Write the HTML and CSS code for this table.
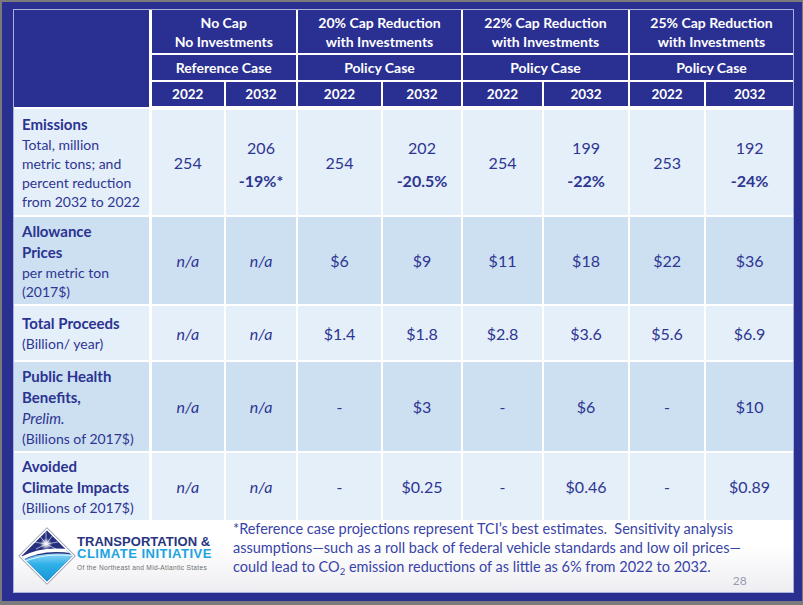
FILE: index.html
```html
<!DOCTYPE html>
<html lang="en">
<head>
<meta charset="utf-8">
<title>TCI Cap Scenarios</title>
<link rel="stylesheet" href="styles.css">
</head>
<body>
<div class="slide">
  <div class="panel">
    <table class="grid">
      <colgroup>
        <col class="c-label"><col class="c1"><col class="c2"><col class="c3"><col class="c4"><col class="c5"><col class="c6"><col class="c7"><col class="c8">
      </colgroup>
      <thead>
        <tr class="h1">
          <th class="corner" rowspan="3"></th>
          <th colspan="2">No Cap<br>No Investments</th>
          <th colspan="2">20% Cap Reduction<br>with Investments</th>
          <th colspan="2">22% Cap Reduction<br>with Investments</th>
          <th colspan="2">25% Cap Reduction<br>with Investments</th>
        </tr>
        <tr class="h2">
          <th colspan="2">Reference Case</th>
          <th colspan="2">Policy Case</th>
          <th colspan="2">Policy Case</th>
          <th colspan="2">Policy Case</th>
        </tr>
        <tr class="h3">
          <th>2022</th><th>2032</th><th>2022</th><th>2032</th><th>2022</th><th>2032</th><th>2022</th><th>2032</th>
        </tr>
      </thead>
      <tbody>
        <tr class="r-emis light">
          <td class="label"><div class="lt">Emissions</div><div class="ls">Total, million<br>metric tons; and<br>percent reduction<br>from 2032 to 2022</div></td>
          <td>254</td>
          <td class="two"><div>206</div><div class="pct">-19%*</div></td>
          <td>254</td>
          <td class="two"><div>202</div><div class="pct">-20.5%</div></td>
          <td>254</td>
          <td class="two"><div>199</div><div class="pct">-22%</div></td>
          <td>253</td>
          <td class="two"><div>192</div><div class="pct">-24%</div></td>
        </tr>
        <tr class="r-allow dark">
          <td class="label"><div class="lt">Allowance<br>Prices</div><div class="ls">per metric ton<br>(2017$)</div></td>
          <td class="na">n/a</td><td class="na">n/a</td>
          <td>$6</td><td>$9</td><td>$11</td><td>$18</td><td>$22</td><td>$36</td>
        </tr>
        <tr class="r-proc light">
          <td class="label"><div class="lt">Total Proceeds</div><div class="ls">(Billion/ year)</div></td>
          <td class="na">n/a</td><td class="na">n/a</td>
          <td>$1.4</td><td>$1.8</td><td>$2.8</td><td>$3.6</td><td>$5.6</td><td>$6.9</td>
        </tr>
        <tr class="r-health dark">
          <td class="label"><div class="lt">Public Health<br>Benefits,</div><div class="li">Prelim.</div><div class="ls">(Billions of 2017$)</div></td>
          <td class="na">n/a</td><td class="na">n/a</td>
          <td>-</td><td>$3</td><td>-</td><td>$6</td><td>-</td><td>$10</td>
        </tr>
        <tr class="r-climate light">
          <td class="label"><div class="lt">Avoided<br>Climate Impacts</div><div class="ls">(Billions of 2017$)</div></td>
          <td class="na">n/a</td><td class="na">n/a</td>
          <td>-</td><td>$0.25</td><td>-</td><td>$0.46</td><td>-</td><td>$0.89</td>
        </tr>
      </tbody>
    </table>
    <div class="footer">
      <div class="logo">
        <svg class="mark" width="58" height="58" viewBox="0 0 58 58" aria-hidden="true">
          <defs>
            <clipPath id="inner"><polygon points="29,3.5 54.5,29 29,54.5 3.5,29"/></clipPath>
            <linearGradient id="cyan" x1="0" y1="0" x2="0" y2="1">
              <stop offset="0" stop-color="#8fd6f5"/>
              <stop offset="0.35" stop-color="#2fb0e8"/>
              <stop offset="1" stop-color="#128fd4"/>
            </linearGradient>
            <radialGradient id="burst" cx="0.5" cy="0.5" r="0.5">
              <stop offset="0" stop-color="#ffffff"/>
              <stop offset="0.4" stop-color="#ffffff" stop-opacity="0.7"/>
              <stop offset="1" stop-color="#ffffff" stop-opacity="0"/>
            </radialGradient>
          </defs>
          <polygon points="29,0.7 57.3,29 29,57.3 0.7,29" fill="#ffffff" stroke="#8c90aa" stroke-width="1"/>
          <g clip-path="url(#inner)">
            <rect width="58" height="58" fill="#27307e"/>
            <path d="M0,35 Q24,23 58,28 L58,58 L0,58 Z" fill="url(#cyan)"/>
            <path d="M1,33 Q24,19 57,25" fill="none" stroke="#ffffff" stroke-width="3.5"/>
            <path d="M1,37 Q24,25 57,29" fill="none" stroke="#d6f0fb" stroke-width="1.2"/>
            <g stroke="#ffffff" stroke-width="0.7" opacity="0.85">
              <line x1="28" y1="17" x2="28" y2="5"/>
              <line x1="28" y1="17" x2="21" y2="8"/>
              <line x1="28" y1="17" x2="35" y2="8"/>
              <line x1="28" y1="17" x2="16" y2="15"/>
              <line x1="28" y1="17" x2="40" y2="15"/>
              <line x1="28" y1="17" x2="18" y2="22"/>
              <line x1="28" y1="17" x2="38" y2="22"/>
            </g>
            <circle cx="28" cy="17" r="6" fill="url(#burst)"/>
          </g>
        </svg>
        <div class="logo-text">
          <div class="lt1">TRANSPORTATION &amp;</div>
          <div class="lt2">CLIMATE INITIATIVE</div>
          <div class="lt3">Of the Northeast and Mid-Atlantic States</div>
        </div>
      </div>
      <p class="note">*Reference case projections represent TCI’s best estimates.&nbsp; Sensitivity analysis<br>assumptions—such as a roll back of federal vehicle standards and low oil prices—<br>could lead to CO<sub>2</sub> emission reductions of as little as 6% from 2022 to 2032.<span class="pageno">28</span></p>
    </div>
  </div>
</div>
</body>
</html>
```
FILE: styles.css
```css
* { box-sizing: border-box; }
html, body { margin: 0; padding: 0; }
body {
  background: #7b7b7d;
  width: 803px;
  height: 605px;
  overflow: hidden;
  font-family: Lato, "Open Sans", sans-serif;
}
.slide {
  margin: 2px 0 0 2px;
  width: 800px;
  height: 599px;
  background: #2a3090;
  padding: 7px 0 0 11px;
}
.panel {
  width: 781px;
  height: 584px;
  border: 1px solid #aab0dc;
  background: linear-gradient(#ffffff 0, #ffffff 92%, #eeeef2 100%);
  display: flex;
  flex-direction: column;
}

/* table */
.grid {
  width: 779px;
  table-layout: fixed;
  border-collapse: collapse;
  border-style: hidden;
}
.c-label { width: 136px; }
.c1 { width: 75px; }
.c2 { width: 72px; }
.c3 { width: 85px; }
.c4 { width: 80px; }
.c5 { width: 81px; }
.c6 { width: 86px; }
.c7 { width: 76px; }
.c8 { width: 88px; }

.grid th, .grid td {
  border: 2px solid #ffffff;
  padding: 0;
  text-align: center;
  vertical-align: middle;
}
.grid th {
  background: #2a3092;
  color: #ffffff;
  font-weight: 700;
  font-size: 14px;
  line-height: 19px;
}
.grid th.corner { border-right-width: 3px; }
.h1 th { height: 44px; }
.h2 th { height: 27px; }
.h3 th { height: 27px; font-size: 13.5px; border-bottom-width: 4px; }

.grid td {
  color: #2e3592;
  font-size: 16px;
  line-height: 19px;
}
.grid td.label {
  text-align: left;
  padding-left: 8px;
  border-right-width: 3px;
}
.light td { background: #e4eff9; }
.dark td { background: #cce0f1; }
.r-emis td { height: 108px; }
.r-allow td { height: 89px; }
.r-proc td { height: 56px; }
.r-health td { height: 91px; }
.r-climate td { height: 68px; }

.lt { font-weight: 700; font-size: 15px; line-height: 21px; color: #2b3391; }
.li { font-style: italic; font-size: 15px; line-height: 21px; }
.ls { font-size: 14px; line-height: 19px; }
.na { font-style: italic; }
.two { padding-top: 2px !important; }
.pct { font-weight: 700; margin-top: 14px; }

/* footer */
.footer {
  display: flex;
  align-items: center;
  flex: 1;
}
.logo {
  width: 219px;
  flex: none;
  display: flex;
  align-items: center;
  padding-left: 4px;
}
.mark { flex: none; display: block; }
.logo-text {
  margin-left: 1px;
  margin-top: -4px;
  font-family: "Liberation Sans", Arial, sans-serif;
  font-weight: 700;
}
.lt1 { font-size: 13px; line-height: 12px; color: #28347f; letter-spacing: 0.05px; }
.lt2 { font-size: 13px; line-height: 12px; color: #1ba4e1; letter-spacing: 0.5px; }
.lt3 { font-size: 6.6px; line-height: 10px; color: #6e6e72; font-weight: 400; margin-top: 3px; letter-spacing: 0.3px; }

.note {
  margin: -4px 0 0 0;
  font-size: 14.5px;
  line-height: 19px;
  color: #3843a8;
  white-space: nowrap;
}
.note sub { font-size: 9.5px; line-height: 0; vertical-align: -3px; }
.pageno {
  font-size: 12px;
  color: #9a9aac;
  margin-left: 22px;
  vertical-align: -13px;
}
```
